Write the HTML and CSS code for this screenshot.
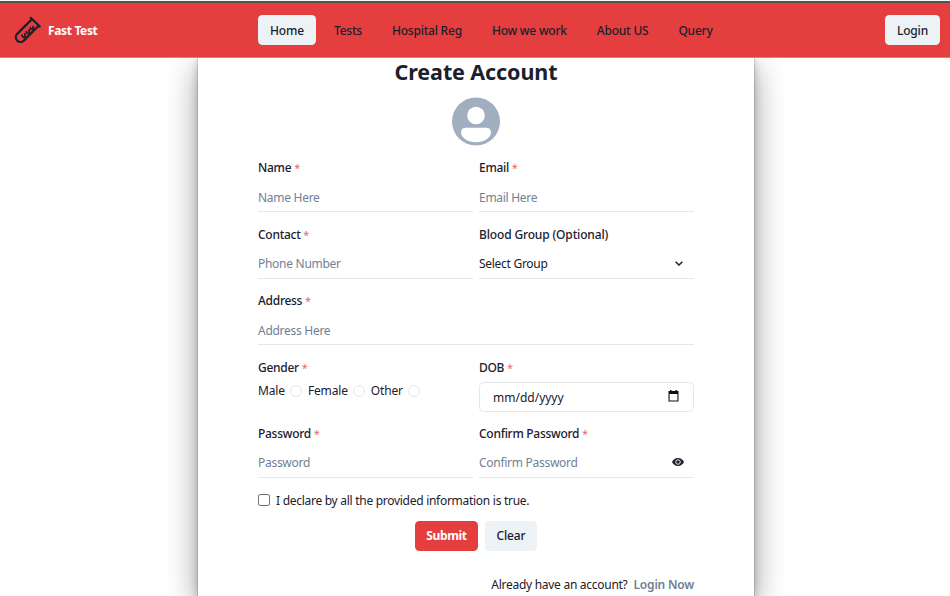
FILE: index.html
```html
<!DOCTYPE html>
<html lang="en">
<head>
<meta charset="utf-8">
<title>Fast Test</title>
<link rel="stylesheet" href="styles.css">
</head>
<body>
<header class="navbar">
  <div class="brand">
    <svg class="brand-icon" viewBox="0 0 28 28" fill="none" stroke="#1a202c" stroke-width="2.200" stroke-linejoin="round" stroke-linecap="round"><path d="M16.700 1.800 25.800 10.500M18 3.100 3.200 17.900a4.700 4.700 0 0 0 6.700 6.700L24.600 9.700"/><path stroke-width="1.800" d="M8 19.200q.2 2.800 3.400 1.800l-.6-3.200M12.400 15.600q.2 2.600 3.200 1.600l-.6-3.200M16.400 11.600q.2 2.600 3 1.600l-.4-2.600"/></svg>
    <span class="brand-name">Fast Test</span>
  </div>
  <nav class="nav">
    <a class="nav-item active">Home</a>
    <a class="nav-item">Tests</a>
    <a class="nav-item">Hospital Reg</a>
    <a class="nav-item">How we work</a>
    <a class="nav-item">About US</a>
    <a class="nav-item">Query</a>
  </nav>
  <button class="btn login">Login</button>
</header>
<main class="card">
  <h1>Create Account</h1>
  <svg class="avatar" viewBox="0 0 48 48"><circle cx="24" cy="24" r="24" fill="#a0aec0"/><circle cx="24" cy="18" r="8.800" fill="#fff"/><path d="M14 30.200h20c3.200 0 5 2 5 4.600 0 6-7.500 10-15 10s-15-4-15-10c0-2.600 1.800-4.600 5-4.600z" fill="#fff"/></svg>
  <form class="form">
    <div class="field"><label>Name <i>*</i></label><input class="line" placeholder="Name Here"></div>
    <div class="field"><label>Email <i>*</i></label><input class="line" placeholder="Email Here"></div>
    <div class="field"><label>Contact <i>*</i></label><input class="line" placeholder="Phone Number"></div>
    <div class="field"><label class="optional">Blood Group (Optional)</label>
      <div class="line select"><span>Select Group</span><svg class="chevron" viewBox="0 0 8 5" fill="none" stroke="#1a202c" stroke-width="1.500"><path d="M.6.7 4 4 7.400.7"/></svg></div></div>
    <div class="field wide"><label>Address <i>*</i></label><input class="line" placeholder="Address Here"></div>
    <div class="field"><label>Gender <i>*</i></label>
      <div class="radios"><span>Male</span><input type="radio" name="g"><span>Female</span><input type="radio" name="g"><span>Other</span><input type="radio" name="g"></div></div>
    <div class="field"><label>DOB <i>*</i></label>
      <div class="date"><span>mm/dd/yyyy</span><svg class="calendar" viewBox="0 0 11 12"><path d="M2 0h1.500v1h4V0H9v1h1.500v10.500H.5V1H2zM1.600 4v6.400h7.800V4z" fill="#111" fill-rule="evenodd"/></svg></div></div>
    <div class="field"><label>Password <i>*</i></label><input class="line" placeholder="Password"></div>
    <div class="field"><label>Confirm Password <i>*</i></label>
      <div class="line select"><span class="muted">Confirm Password</span><svg class="eye" viewBox="0 0 12 8"><path d="M6 0C3.200 0 1 1.700 0 4c1 2.300 3.200 4 6 4s5-1.700 6-4C11 1.700 8.800 0 6 0z" fill="#1a202c"/><circle cx="6" cy="4" r="2.250" fill="none" stroke="#fff" stroke-width=".9"/></svg></div></div>
  </form>
  <label class="declare"><span class="box"></span><span>I declare by all the provided information is true.</span></label>
  <div class="actions"><button class="btn submit">Submit</button><button class="btn clear">Clear</button></div>
  <p class="signin"><span>Already have an account?</span><a>Login Now</a></p>
</main>
</body>
</html>
```
FILE: styles.css
```css
* { box-sizing: border-box; }
html, body { height: 100%; }
body {
  display: flex;
  flex-direction: column;
  margin: 0;
  overflow: hidden;
  background: #fff;
  color: #1a202c;
  font: 12px/18px "Noto Sans", "Open Sans", sans-serif;
  letter-spacing: -0.28px;
}
button, input { font: inherit; letter-spacing: inherit; color: inherit; }
.navbar {
  position: relative;
  z-index: 1;
  flex: none;
  display: flex;
  align-items: center;
  height: 58px;
  padding: 3px 10px 0 14px;
  background: #e53e3e;
  border-top: 1px solid #f0f7f4;
  border-bottom: 1px solid #ef7676;
  box-shadow: inset 0 2px #59514c;
}
.brand { display: flex; align-items: center; gap: 6px; width: 244px; }
.brand-icon { width: 28px; height: 28px; margin-top: -1px; }
.brand-name { color: #fff; font-weight: 700; letter-spacing: -0.35px; }
.nav { display: flex; gap: 6px; flex: 1; margin-top: -1px; letter-spacing: -0.22px; }
.nav-item {
  display: flex;
  align-items: center;
  justify-content: center;
  height: 30px;
  padding: 1px 12px 0;
  border-radius: 4.500px;
  font-weight: 500;
  white-space: nowrap;
}
.active { width: 58px; background: #edf2f7; letter-spacing: -0.1px; }
.btn {
  height: 30px;
  padding: 1px 0 0;
  border: 0;
  border-radius: 4.500px;
  background: #edf2f7;
  font-weight: 500;
  letter-spacing: -0.15px;
}
.login { width: 55px; margin-top: -1px; }
.card {
  flex: 1;
  display: flex;
  flex-direction: column;
  align-items: center;
  width: 556px;
  margin: -1px 0 0 198px;
  padding: 1px 60px 0;
  background: #fff;
  box-shadow: 0 0 0 1px rgba(0,0,0,.1), 0 4px 8px rgba(0,0,0,.2), 0 11px 30px rgba(0,0,0,.4);
}
h1 { margin: 0; font-size: 21.500px; line-height: 28px; font-weight: 700; letter-spacing: -0.1px; white-space: nowrap; }
.avatar { width: 48px; height: 49px; margin: 11px 0 13.400px; flex: none; }
.form {
  display: grid;
  grid-template-columns: 215px 215px;
  column-gap: 6px;
  row-gap: 12.400px;
  width: 436px;
}
.field { display: flex; flex-direction: column; height: 54px; }
.wide { grid-column: span 2; }
.field label { height: 18px; margin-bottom: 5px; font-weight: 500; white-space: nowrap; }
.field .optional { letter-spacing: -0.15px; }
.field i { color: #e53e3e; font-style: normal; font-weight: 400; font-size: 11px; opacity: .8; }
.line {
  width: 100%;
  height: 30px;
  padding: 1px 0 0;
  border: 0;
  border-bottom: 1px solid #e2e8f0;
  background: none;
  outline: 0;
}
.line::placeholder, .muted { color: #718096; opacity: 1; }
.select { display: flex; align-items: center; justify-content: space-between; padding-right: 11px; }
.chevron { width: 8px; height: 5px; }
.eye { width: 12px; height: 8px; margin-right: -1px; margin-top: -1px; }
.radios { display: flex; align-items: center; height: 18px; letter-spacing: -0.15px; }
.radios input {
  appearance: none;
  width: 12px;
  height: 12px;
  margin: 0 6px 0 5px;
  border: 1px solid #e2e8f0;
  border-radius: 50%;
}
.date {
  display: flex;
  align-items: center;
  justify-content: space-between;
  height: 30px;
  padding: 2px 14px 0 13px;
  border: 1px solid #e2e8f0;
  border-radius: 4.500px;
  letter-spacing: 0;
}
.calendar { width: 11px; height: 12px; margin-top: -3px; }
.declare { display: flex; align-items: center; gap: 6px; align-self: flex-start; margin-top: 12.600px; height: 18px; white-space: nowrap; }
.box { width: 12px; height: 12px; margin-top: -2px; border: 1px solid #767676; border-radius: 2px; }
.actions { display: flex; gap: 7px; margin-top: 11px; }
.submit { width: 63px; background: #e53e3e; color: #fff; font-weight: 700; letter-spacing: -0.35px; }
.clear { width: 52px; }
.signin { display: flex; gap: 6px; align-self: flex-end; margin: 25px 0 0; white-space: nowrap; }
.signin a { color: #718096; font-weight: 600; letter-spacing: -0.2px; }
```
